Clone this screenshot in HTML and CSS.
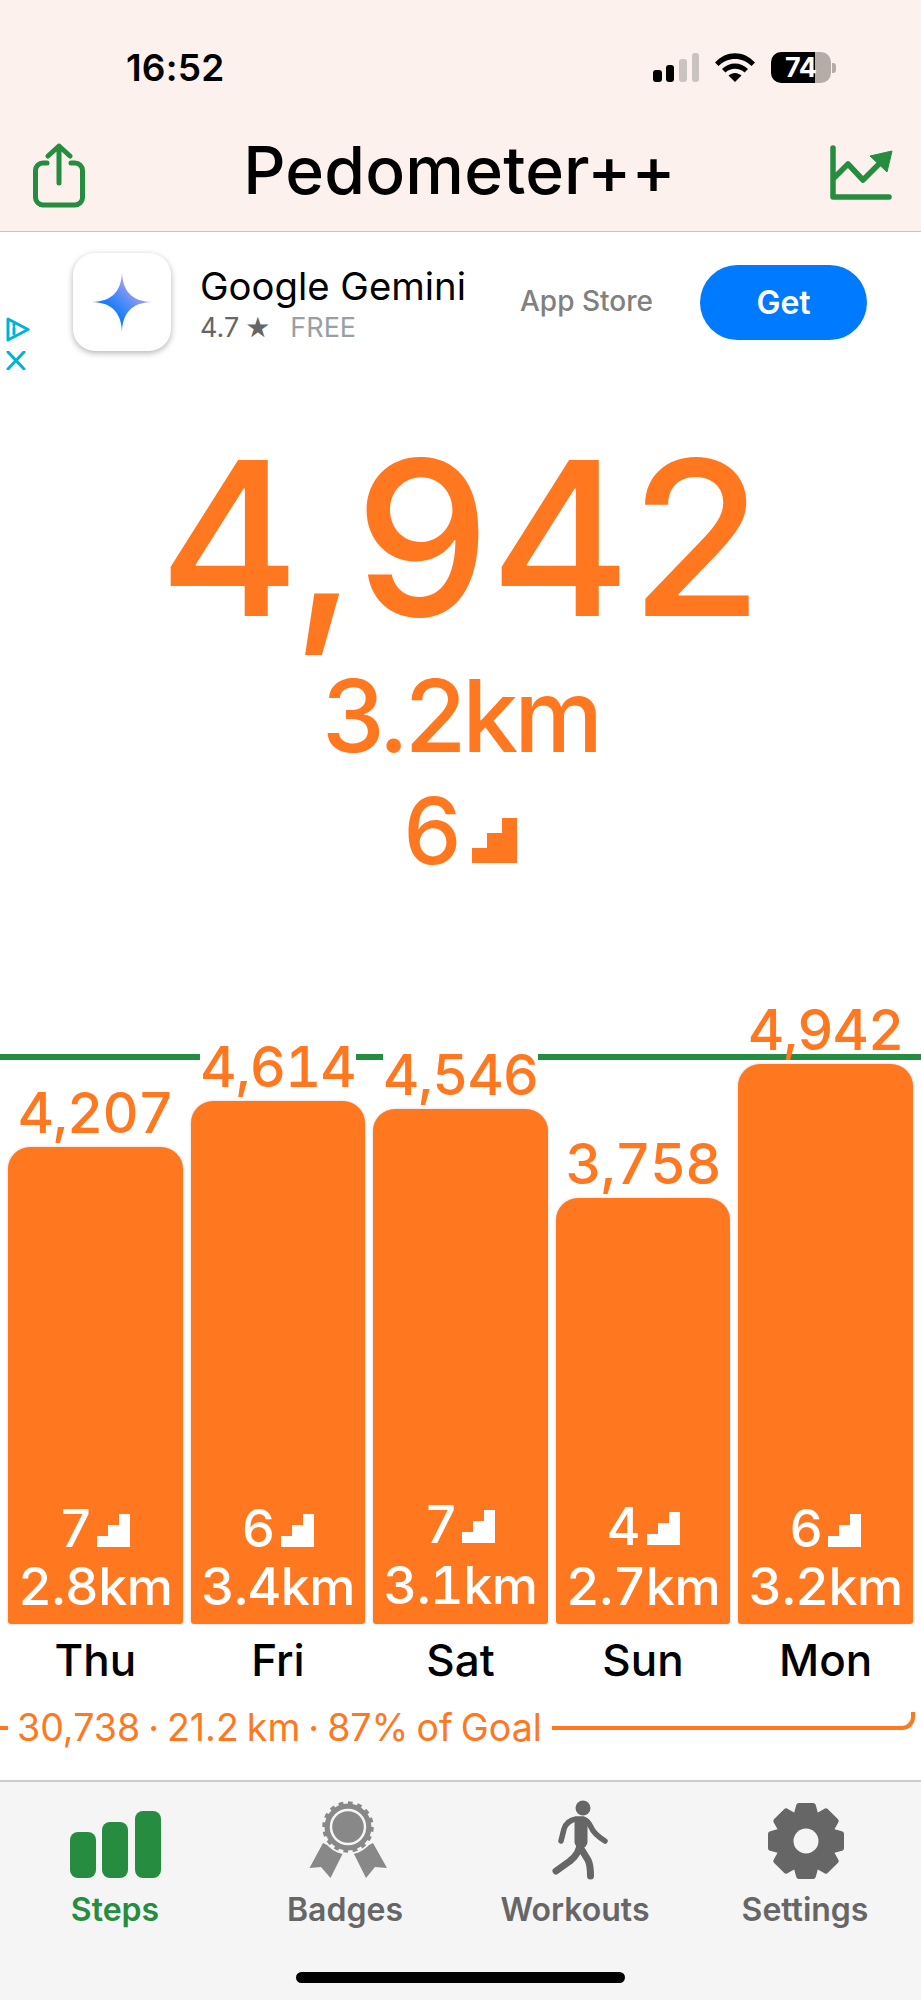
FILE: index.html
```html
<!DOCTYPE html>
<html lang="en">
<head>
<meta charset="utf-8">
<title>Pedometer++</title>
<link rel="stylesheet" href="styles.css">
</head>
<body>
<svg class="defs" width="0" height="0" aria-hidden="true"><symbol id="stairs" viewBox="0 0 3 3"><path d="M0 3V2H1V1H2V0H3V3Z"/></symbol></svg>
<div class="screen">
  <header class="topbar">
    <div class="status">
      <span class="time">16:52</span>
      <div class="status-icons">
        <svg class="signal" width="46" height="29" viewBox="0 0 46 29"><rect class="on" x="0" y="17" width="9" height="12" rx="3"/><rect class="on" x="13" y="12" width="8" height="17" rx="3"/><rect class="off" x="26" y="6" width="8" height="23" rx="3"/><rect class="off" x="39" y="0" width="7" height="29" rx="3"/></svg>
        <svg class="wifi" width="40" height="29" viewBox="0 0 40 29"><path d="M0 9.500C11-3 29-3 40 9.500L36.500 13C27.500 3.500 12.500 3.500 3.500 13Z"/><path d="M7 16C14 8.500 26 8.500 33 16L29.500 19.500C24.500 14.500 15.500 14.500 10.500 19.500Z"/><path d="M13.500 22.500C17.500 19 22.500 19 26.500 22.500L20 29Z"/></svg>
        <div class="battery"><div class="batt-body"><span class="batt-num">74</span></div><div class="batt-nub"></div></div>
      </div>
    </div>
    <nav class="nav">
      <svg class="nav-share" width="52" height="65" viewBox="0 0 52 65"><path d="M14 20H10a7.500 7.500 0 0 0-7.500 7.500V54.500A7.500 7.500 0 0 0 10 62H42a7.500 7.500 0 0 0 7.500-7.500V27.500A7.500 7.500 0 0 0 42 20H38"/><path d="M26 40V3M15 13L26 3L37 13"/></svg>
      <h1 class="title">Pedometer++</h1>
      <svg class="nav-chart" width="63" height="55" viewBox="0 0 63 55"><path class="axis" d="M3 3V52H59"/><path class="axis" d="M5 32L18 19L33 35L50 18"/><path class="head" d="M40 11L62 6L57 27Z"/></svg>
    </nav>
  </header>

  <section class="ad">
    <div class="ad-choices">
      <svg width="24" height="25" viewBox="0 0 24 25"><path d="M2 2L22 12.500L2 23Z"/><path d="M8 11V17M8 7V8.500"/></svg>
      <svg width="20" height="19" viewBox="0 0 20 19"><path d="M2 1L18 18M18 1L2 18"/></svg>
    </div>
    <div class="ad-icon">
      <svg width="60" height="60" viewBox="0 0 60 60"><defs><linearGradient id="gem" x1="0.1" y1="0.9" x2="0.85" y2="0.15"><stop offset="0.35" stop-color="#1a7cff"/><stop offset="0.6" stop-color="#5a8ff8"/><stop offset="0.9" stop-color="#c4a0ee"/></linearGradient></defs><path fill="url(#gem)" d="M30 0C30.500 18 39 29.500 60 30C39 30.500 30.500 42 30 60C29.500 42 21 30.500 0 30C21 29.500 29.500 18 30 0Z"/></svg>
    </div>
    <div class="ad-info">
      <div class="ad-name">Google Gemini</div>
      <div class="ad-meta"><span>4.7</span><span class="ad-star">★</span><span class="ad-free">FREE</span></div>
    </div>
    <div class="ad-store">App Store</div>
    <div class="ad-get">Get</div>
  </section>

  <section class="hero">
    <div class="hero-steps">4,942</div>
    <div class="hero-dist">3.2km</div>
    <div class="hero-floors"><span>6</span><svg class="stairs-lg"><use href="#stairs"/></svg></div>
  </section>

  <section class="chart">
    <div class="goal-line"></div>
    <div class="cols">
      <div class="col"><div class="val">4,207</div><div class="bar" style="height:477px"><div class="floors"><span>7</span><svg class="stairs"><use href="#stairs"/></svg></div><div class="km">2.8km</div></div><div class="day">Thu</div></div>
      <div class="col"><div class="val val-knock">4,614</div><div class="bar" style="height:523px"><div class="floors"><span>6</span><svg class="stairs"><use href="#stairs"/></svg></div><div class="km">3.4km</div></div><div class="day">Fri</div></div>
      <div class="col"><div class="val val-knock">4,546</div><div class="bar" style="height:515px"><div class="floors floors-up"><span>7</span><svg class="stairs"><use href="#stairs"/></svg></div><div class="km km-up">3.1km</div></div><div class="day">Sat</div></div>
      <div class="col"><div class="val">3,758</div><div class="bar" style="height:426px"><div class="floors floors-up-sm"><span>4</span><svg class="stairs"><use href="#stairs"/></svg></div><div class="km">2.7km</div></div><div class="day">Sun</div></div>
      <div class="col"><div class="val">4,942</div><div class="bar" style="height:560px"><div class="floors"><span>6</span><svg class="stairs"><use href="#stairs"/></svg></div><div class="km">3.2km</div></div><div class="day">Mon</div></div>
    </div>
    <div class="summary">
      <div class="sum-tick"></div>
      <div class="sum-text">30,738 · 21.2 km · 87% of Goal</div>
      <div class="sum-curve"></div>
    </div>
  </section>

  <footer class="tabs">
    <div class="tab tab-active">
      <svg class="tab-icon" width="92" height="68" viewBox="0 0 92 68"><rect x="1" y="21" width="26" height="46" rx="8"/><rect x="33" y="11" width="26" height="56" rx="8"/><rect x="66" y="0" width="26" height="67" rx="8"/></svg>
      <span>Steps</span>
    </div>
    <div class="tab">
      <svg class="tab-icon badge" width="80" height="80" viewBox="0 0 80 80"><path d="M15 43L35 53L22.500 78L13 67L1.500 68Z"/><path d="M65 43L45.500 53L58 78L67 67L79 68Z"/><circle class="halo" cx="40" cy="27" r="27.500"/><circle class="seal" cx="40" cy="27" r="23.500"/><circle class="teeth" cx="40" cy="27" r="24" pathLength="32"/><circle class="ring" cx="40" cy="27" r="17"/></svg>
      <span>Badges</span>
    </div>
    <div class="tab">
      <svg class="tab-icon walker" width="56" height="80" viewBox="0 0 56 80"><circle cx="31" cy="8" r="7.500"/><path class="arm" d="M9 41L12 29C14 23 18 20 24 19H31C35 20 37 23 39 27C41 32 45 36 53 41"/><path class="trunk" d="M29 24V42"/><path class="leg" d="M28 42C28 51 24 56 18 61L4 71"/><path class="leg" d="M28 47L36 60C38 64 38.500 68 38.500 76"/></svg>
      <span>Workouts</span>
    </div>
    <div class="tab">
      <svg class="tab-icon gear" width="76" height="76" viewBox="0 0 76 76"><circle cx="38" cy="38" r="28"/><g><path id="tooth" d="M31 0H45Q47.500 0 48 3L51 14V22H25V14L28 3Q28.500 0 31 0Z"/><use href="#tooth" transform="rotate(45 38 38)"/><use href="#tooth" transform="rotate(90 38 38)"/><use href="#tooth" transform="rotate(135 38 38)"/><use href="#tooth" transform="rotate(180 38 38)"/><use href="#tooth" transform="rotate(225 38 38)"/><use href="#tooth" transform="rotate(270 38 38)"/><use href="#tooth" transform="rotate(315 38 38)"/></g><circle class="hole" cx="38" cy="38" r="12.500"/></svg>
      <span>Settings</span>
    </div>
    <div class="home"></div>
  </footer>
</div>
</body>
</html>
```
FILE: styles.css
```css
* { box-sizing: border-box; margin: 0; padding: 0; }
html, body { background: #fff; }
body { font-family: Inter, "Liberation Sans", sans-serif; width: 921px; height: 2000px; overflow: hidden; }
.defs { position: absolute; }
.screen { width: 921px; height: 2000px; display: flex; flex-direction: column; }

/* top */
.topbar { height: 232px; background: #fcf1ec; border-bottom: 1px solid #c9c2be; flex: none; }
.status { height: 132px; padding: 52px 85px 0 126px; display: flex; justify-content: space-between; align-items: flex-start; }
.time { font-size: 37px; line-height: 32px; font-weight: 600; color: #000; letter-spacing: 0.2px; }
.status-icons { display: flex; align-items: flex-start; gap: 16px; margin-left: auto; margin-right: 0; }
.signal, .wifi { display: block; margin-top: 1px; }
.signal .on { fill: #000; }
.signal .off { fill: #cbc3bf; }
.wifi path { fill: #000; }
.battery { display: flex; align-items: center; gap: 1px; }
.batt-body { width: 60px; height: 31px; border-radius: 10px; background: linear-gradient(90deg, #000 0 44px, #b5aca8 44px 60px); padding-left: 14px; }
.batt-num { display: block; font-size: 27px; line-height: 31px; font-weight: 700; color: #fff; letter-spacing: -0.5px; }
.batt-nub { width: 4px; height: 10px; border-radius: 0 3px 3px 0; background: #b5aca8; }

.nav { height: 99px; padding: 11px 28px 0 33px; display: flex; align-items: flex-start; justify-content: space-between; position: relative; }
.nav-share { fill: none; stroke: #268c3f; stroke-width: 5; stroke-linecap: round; stroke-linejoin: round; display: block; }
.nav-chart { margin-top: 2px; display: block; }
.nav-chart .axis { fill: none; stroke: #268c3f; stroke-width: 5.500; stroke-linecap: round; stroke-linejoin: round; }
.nav-chart .head { fill: #268c3f; stroke: #268c3f; stroke-width: 1; stroke-linejoin: round; }
.title { font-size: 66px; line-height: 72px; font-weight: 500; color: #000; flex: 1; text-align: center; margin-top: -9px; letter-spacing: 0.2px; padding-left: 4px; }

/* ad */
.ad { height: 170px; flex: none; position: relative; display: flex; align-items: flex-start; padding: 21px 56px 0 73px; }
.ad-choices { position: absolute; left: 6px; top: 85px; display: flex; flex-direction: column; gap: 9px; }
.ad-choices svg { display: block; fill: none; stroke: #00b4d0; stroke-width: 3; stroke-linejoin: round; stroke-linecap: round; }
.ad-icon { width: 98px; height: 98px; border-radius: 22px; background: #fff; box-shadow: 0 2px 6px rgba(0,0,0,.3); display: flex; align-items: center; justify-content: center; flex: none; }
.ad-info { margin-left: 29px; width: 320px; flex: none; }
.ad-name { font-size: 38.300px; line-height: 42px; color: #000; margin-top: 12px; }
.ad-meta { display: flex; align-items: center; font-size: 27px; line-height: 30px; color: #666; margin-top: 6px; }
.ad-star { margin-left: 6px; font-size: 28px; font-family: "DejaVu Sans", sans-serif; }
.ad-free { margin-left: 20px; color: #9a9ea6; }
.ad-store { margin-top: 28px; font-size: 28px; line-height: 40px; font-weight: 500; color: #808080; width: 180px; flex: none; }
.ad-get { width: 167px; height: 75px; margin-top: 12px; margin-left: auto; border-radius: 38px; background: #007aff; color: #fff; font-size: 32px; font-weight: 600; display: flex; align-items: center; justify-content: center; flex: none; }

/* hero */
.hero { flex: none; height: 594px; color: #ff7820; display: flex; flex-direction: column; align-items: center; }
.hero-steps { font-size: 215px; line-height: 190px; font-weight: 500; margin-top: 41px; letter-spacing: -0.5px; }
.hero-dist { font-size: 100px; line-height: 100px; font-weight: 500; margin-top: 33px; letter-spacing: -4px; }
.hero-floors { display: flex; align-items: flex-end; gap: 11px; font-size: 92px; line-height: 100px; font-weight: 500; margin-top: 15px; }
.stairs-lg { width: 45px; height: 45px; fill: #ff7820; margin-bottom: 18px; shape-rendering: crispEdges; }

/* chart */
.chart { flex: 1; position: relative; display: flex; flex-direction: column; }
.goal-line { position: absolute; left: 0; right: 0; top: 58px; height: 6px; background: #268c3f; }
.cols { position: relative; display: grid; grid-template-columns: repeat(5, 1fr); gap: 7.750px; padding: 0 8px; height: 696px; }
.col { display: flex; flex-direction: column; align-items: stretch; justify-content: flex-end; }
.val { align-self: center; font-size: 56px; line-height: 56px; font-weight: 500; color: #ff7820; margin-bottom: 6px; white-space: nowrap; font-variant-numeric: tabular-nums; letter-spacing: -1px; }
.val-knock { background: #fff; }
.bar { background: #ff7820; color: #fff; border-radius: 22px 22px 3px 3px; box-shadow: 0 0 3px rgba(0,0,0,.18); display: flex; flex-direction: column; justify-content: flex-end; align-items: center; padding-bottom: 10px; overflow: hidden; flex: none; }
.floors { display: flex; align-items: flex-end; gap: 6px; font-size: 52px; line-height: 62px; font-weight: 500; }
.stairs { width: 33px; height: 33px; fill: #fff; margin-bottom: 13px; shape-rendering: crispEdges; }
.floors-up { margin-bottom: 3px; }
.floors-up-sm { margin-bottom: 2px; }
.km { font-size: 52px; line-height: 54px; font-weight: 500; letter-spacing: -0.5px; font-variant-numeric: tabular-nums; }
.km-up { margin-bottom: 1px; }
.day { height: 68px; font-size: 44px; line-height: 73px; font-weight: 500; text-align: center; color: #000; flex: none; }
.summary { display: flex; align-items: flex-start; height: 88px; padding-top: 9px; color: #ff7820; }
.sum-tick { width: 8px; height: 4px; background: #ff7820; margin-top: 25px; margin-right: 9px; flex: none; }
.sum-text { font-size: 37.500px; line-height: 50px; font-weight: 400; flex: none; white-space: nowrap; margin-top: 2px; word-spacing: -2.500px; }
.sum-curve { flex: 1; height: 18px; margin: 11px 6px 0 10px; border-bottom: 4px solid #ff7820; border-right: 4px solid #ff7820; border-bottom-right-radius: 13px; }

/* tabs */
.tabs { height: 220px; flex: none; position: relative; background: #f5f5f5; border-top: 2px solid #ccc; display: grid; grid-template-columns: repeat(4, 230px); align-items: start; }
.tab { display: flex; flex-direction: column; align-items: center; color: #666; font-size: 32px; font-weight: 600; line-height: 40px; height: 150px; position: relative; padding-top: 18px; }
.tab span { position: absolute; top: 108px; }
.tab-active { color: #268c3f; }
.tab-icon { display: block; fill: currentColor; }
.tab-active .tab-icon { margin-top: 11px; }
.badge { fill: #888; margin-left: 5px; }
.badge .halo { fill: #f5f5f5; }
.badge .seal { fill: #888; }
.badge .teeth { fill: none; stroke: #888; stroke-width: 3.500; stroke-dasharray: 1 1; }
.badge .ring { stroke: #f5f5f5; stroke-width: 2.500; fill: #888; }
.walker { margin-left: 9px; }
.walker .arm { fill: none; stroke: #666; stroke-width: 5.500; stroke-linecap: round; stroke-linejoin: round; }
.walker .trunk { fill: none; stroke: #666; stroke-width: 13; stroke-linecap: round; }
.walker .leg { fill: none; stroke: #666; stroke-width: 7; stroke-linecap: round; stroke-linejoin: round; }
.gear { margin-top: 3px; margin-left: 1px; }
.gear .hole { fill: #f5f5f5; }
.home { position: absolute; left: 296px; top: 190px; width: 329px; height: 11px; border-radius: 6px; background: #000; }
```
